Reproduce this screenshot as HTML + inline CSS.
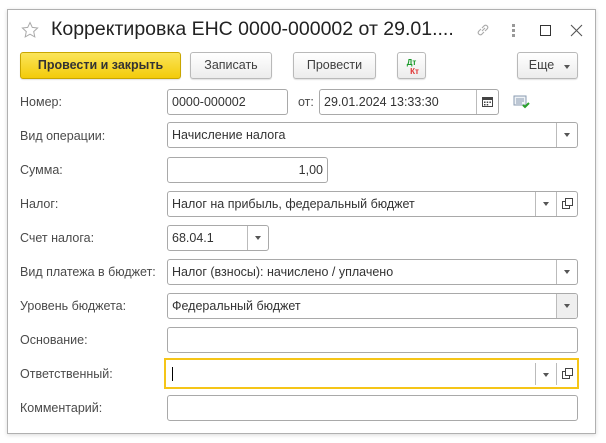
<!DOCTYPE html>
<html><head><meta charset="utf-8"><style>
*{box-sizing:border-box;margin:0;padding:0}
body{width:606px;height:443px;background:#fff;font-family:"Liberation Sans",Arial,sans-serif;font-size:12.5px;color:#333;position:relative;overflow:hidden}
.win{position:absolute;left:7px;top:9px;width:589px;height:425px;border:1px solid #b0b0b0;background:#fff;box-shadow:0 1px 4px rgba(0,0,0,.15)}
.a{position:absolute}
.lbl{position:absolute;left:20px;color:#4a4a4a;font-size:12.5px}
.f{position:absolute;border:1px solid #a9a9a9;border-radius:3px;background:#fff;height:26px;line-height:24px;padding-left:4px;color:#333;font-size:12.5px;white-space:nowrap;overflow:hidden}
.btn{position:absolute;top:52px;height:27px;border:1px solid #b9b9b9;border-radius:3px;background:linear-gradient(#fff,#ececec);text-align:center;line-height:25px;color:#404040;font-size:12.5px;box-shadow:0 1px 1px rgba(0,0,0,.12)}
.dd{position:absolute;top:0;width:21px;height:24px;border-left:1px solid #bbb}
.dd:after{content:"";position:absolute;left:7px;top:10px;border-left:3.5px solid transparent;border-right:3.5px solid transparent;border-top:4px solid #555}
.op{position:absolute;top:0;width:21px;height:24px;border-left:1px solid #bbb}
</style></head><body>
<div class="win"></div>
<svg class="a" style="left:21px;top:21px" width="18" height="18" viewBox="0 0 18 18"><path d="M9 1.5l2.3 4.9 5.3.6-3.9 3.6 1.1 5.3L9 13.2 4.2 15.9l1.1-5.3L1.4 7l5.3-.6z" fill="none" stroke="#aaa" stroke-width="1"/></svg>
<div class="a" style="left:51px;top:18px;font-size:19.5px;color:#222;white-space:nowrap">Корректировка ЕНС 0000-000002 от 29.01....</div>
<svg class="a" style="left:474px;top:21px" width="18" height="18" viewBox="0 0 18 18"><g fill="none" stroke="#aaa" stroke-width="1.1"><path d="M8 10l3-3"/><path d="M7 8L4.5 10.5a2.2 2.2 0 0 0 3 3L10 11"/><path d="M8 7l2.5-2.5a2.2 2.2 0 0 1 3 3L11 10"/></g></svg>
<div class="a" style="left:512px;top:24px;width:3px"><div style="width:3px;height:3px;background:#999;margin-bottom:2px"></div><div style="width:3px;height:3px;background:#999;margin-bottom:2px"></div><div style="width:3px;height:3px;background:#999"></div></div>
<div class="a" style="left:540px;top:25px;width:11px;height:11px;border:1.3px solid #333"></div>
<svg class="a" style="left:570px;top:24px" width="13" height="13" viewBox="0 0 13 13"><path d="M1 1l11 11M12 1L1 12" stroke="#555" stroke-width="1.1"/></svg>

<div class="btn" style="left:20px;width:161px;background:linear-gradient(#fbe55a,#f3cb0a);border-color:#c9a600;color:#333;font-weight:bold">Провести и закрыть</div>
<div class="btn" style="left:190px;width:82px">Записать</div>
<div class="btn" style="left:293px;width:83px">Провести</div>
<div class="btn" style="left:397px;width:29px;line-height:9px;font-size:8px;font-weight:bold;padding-top:5px"><span style="color:#1a9a2a">Дт</span><br><span style="color:#e03030;padding-left:6px">Кт</span></div>
<div class="btn" style="left:517px;width:61px;padding-right:12px">Еще<span style="position:absolute;right:7px;top:12px;border-left:3px solid transparent;border-right:3px solid transparent;border-top:4px solid #555"></span></div>

<div class="lbl" style="top:95px">Номер:</div>
<div class="f" style="left:167px;top:89px;width:121px">0000-000002</div>
<div class="a" style="left:298px;top:95px;color:#4a4a4a">от:</div>
<div class="f" style="left:319px;top:89px;width:180px">29.01.2024 13:33:30<div class="op" style="right:0;width:22px"><svg style="position:absolute;left:5px;top:6px" width="11" height="11" viewBox="0 0 11 11"><rect x="0.5" y="1.5" width="10" height="9" fill="none" stroke="#444"/><rect x="0.5" y="1.5" width="10" height="2.5" fill="#444"/><g fill="#444"><rect x="2" y="5.5" width="1.5" height="1.5"/><rect x="4.7" y="5.5" width="1.5" height="1.5"/><rect x="7.4" y="5.5" width="1.5" height="1.5"/><rect x="2" y="8" width="1.5" height="1.5"/><rect x="4.7" y="8" width="1.5" height="1.5"/></g></svg></div></div>
<svg class="a" style="left:513px;top:95px" width="18" height="14" viewBox="0 0 18 14"><rect x="1" y="1" width="12" height="9" fill="#eef2f6" stroke="#8a9bb0"/><path d="M3 4h8M3 6h8M3 8h6" stroke="#8a9bb0"/><path d="M10 10l2 2 4-4" stroke="#2aa02a" stroke-width="2" fill="none"/></svg>

<div class="lbl" style="top:129px">Вид операции:</div>
<div class="f" style="left:167px;top:122px;width:411px">Начисление налога<div class="dd" style="right:0"></div></div>

<div class="lbl" style="top:163px">Сумма:</div>
<div class="f" style="left:167px;top:157px;width:161px;text-align:right;padding-right:4px">1,00</div>

<div class="lbl" style="top:197px">Налог:</div>
<div class="f" style="left:167px;top:191px;width:411px">Налог на прибыль, федеральный бюджет<div class="dd" style="right:21px"></div><div class="op" style="right:0"><svg style="position:absolute;left:5px;top:6px" width="11" height="11" viewBox="0 0 11 11"><path d="M3.5 0.5h7v7h-7z M3.5 3.5H0.5v7h7v-3" fill="none" stroke="#444"/></svg></div></div>

<div class="lbl" style="top:231px">Счет налога:</div>
<div class="f" style="left:167px;top:225px;width:102px">68.04.1<div class="dd" style="right:0"></div></div>

<div class="lbl" style="top:265px">Вид платежа в бюджет:</div>
<div class="f" style="left:167px;top:259px;width:411px">Налог (взносы): начислено / уплачено<div class="dd" style="right:0"></div></div>

<div class="lbl" style="top:299px">Уровень бюджета:</div>
<div class="f" style="left:167px;top:293px;width:411px">Федеральный бюджет<div class="dd" style="right:0;background:#efefef"></div></div>

<div class="lbl" style="top:333px">Основание:</div>
<div class="f" style="left:167px;top:327px;width:411px"></div>

<div class="lbl" style="top:367px">Ответственный:</div>
<div class="a" style="left:164px;top:358px;width:415px;height:31px;border:2px solid #f5c518;background:#fff">
<div class="a" style="left:6px;top:7px;width:1px;height:14px;background:#000"></div>
<div class="dd" style="right:21px;top:3px;height:22px"></div>
<div class="op" style="right:0;top:3px;height:22px"><svg style="position:absolute;left:5px;top:5px" width="11" height="11" viewBox="0 0 11 11"><path d="M3.5 0.5h7v7h-7z M3.5 3.5H0.5v7h7v-3" fill="none" stroke="#444"/></svg></div>
</div>

<div class="lbl" style="top:401px">Комментарий:</div>
<div class="f" style="left:167px;top:395px;width:411px"></div>
</body></html>
